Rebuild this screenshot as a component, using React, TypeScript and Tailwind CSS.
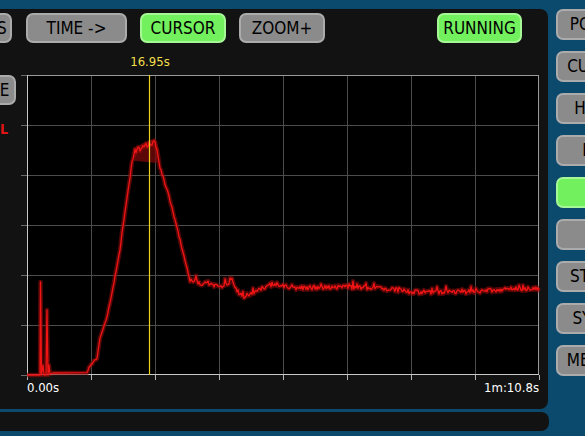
import React from 'react';
import clsx from 'clsx';

const FONT = "font-['DejaVu_Sans_Condensed','DejaVu_Sans',sans-serif]";

const PLOT_W = 512;
const PLOT_H = 300;
const CURSOR_X = 122;

// trace shape, in screen coords of the original capture (offset 27,75)
const KEY: [number, number][] = [
    [87, 373], [89, 367], [97, 358], [100, 338], [107, 317], [112, 293], [115, 277], [120, 250],
    [122, 233], [130, 177], [133, 157], [135, 150], [145, 147], [150, 144], [155, 141], [157, 150],
    [160, 167], [170, 200], [180, 240], [188, 273], [190, 280], [200, 283], [220, 287], [233, 283],
    [238, 292], [242, 298], [253, 292], [273, 284], [297, 288], [340, 287], [380, 288], [413, 292],
    [463, 292], [513, 289], [539, 289],
];

const START: [number, number][] = [
    [27, 375], [40, 375], [40.5, 282], [41.5, 375], [43, 365], [44, 375], [46, 375], [47, 310],
    [48, 375], [49, 365], [50, 374], [53, 373],
];

function rng(seed: number) {
    let s = seed;
    return () => {
        s = (s * 1664525 + 1013904223) % 4294967296;
        return s / 4294967296;
    };
}

function interp(x: number) {
    for (let i = 0; i < KEY.length - 1; i++) {
        const [x0, y0] = KEY[i];
        const [x1, y1] = KEY[i + 1];
        if (x >= x0 && x <= x1) return y0 + ((y1 - y0) * (x - x0)) / (x1 - x0);
    }
    return KEY[KEY.length - 1][1];
}

function buildTrace() {
    const r = rng(7);
    const pts: [number, number][] = [...START];
    for (let x = 87; x <= 539; x += 1) {
        let amp = 0.6;
        if (x >= 130 && x < 158) amp = 3;
        else if (x >= 158 && x < 188) amp = 1.4;
        else if (x >= 188) amp = 2.2;
        let y = interp(x) + (r() - 0.5) * amp * 2;
        if (x > 188 && r() > 0.93) y -= 3 + r() * 3;
        pts.push([x, y]);
    }
    return pts.map(([x, y]) => `${(x - 27).toFixed(1)},${(y - 75).toFixed(1)}`).join(' ');
}

const TRACE = buildTrace();

function Btn({ label, on, className }: { label: string; on?: boolean; className?: string }) {
    return (
        <div
            className={clsx(
                'flex shrink-0 items-center justify-center whitespace-nowrap rounded-[7px] border-2 text-[17px] leading-none text-black',
                on ? 'border-[#a6f796] bg-[#72f05e]' : 'border-[#ababab] bg-[#8b8b8b]',
                className
            )}
        >
            {label}
        </div>
    );
}

function Plot() {
    const hs = [0, 50, 100, 150, 200, 250, 300];
    const vs = [0, 64, 128, 192, 256, 320, 384, 448, 512];
    return (
        <div className="h-[300px] w-[512px] bg-black">
            <svg width={PLOT_W} height={PLOT_H} overflow="visible" className="overflow-visible">
                {hs.slice(1, -1).map((y) => (
                    <line key={'h' + y} x1={0} x2={PLOT_W} y1={y + 0.5} y2={y + 0.5} stroke="#4c4c4c" />
                ))}
                {vs.slice(1, -1).map((x) => (
                    <line key={'v' + x} x1={x + 0.5} x2={x + 0.5} y1={0} y2={PLOT_H} stroke="#4c4c4c" />
                ))}
                {hs.map((y) => (
                    <line key={'lt' + y} x1={-6} x2={0} y1={y + 0.5} y2={y + 0.5} stroke="#6a6a6a" />
                ))}
                {vs.map((x) => (
                    <line key={'bt' + x} x1={x + 0.5} x2={x + 0.5} y1={PLOT_H} y2={PLOT_H + 5} stroke="#b5b5b5" />
                ))}
                <line x1={0} x2={PLOT_W} y1={0.5} y2={0.5} stroke="#9a9a9a" />
                <line x1={PLOT_W - 0.5} x2={PLOT_W - 0.5} y1={0} y2={PLOT_H} stroke="#9a9a9a" />
                <line x1={0.5} x2={0.5} y1={0} y2={PLOT_H} stroke="#c8c8c8" />
                <line x1={0} x2={PLOT_W} y1={PLOT_H - 0.5} y2={PLOT_H - 0.5} stroke="#c8c8c8" />

                <polygon points="106,73 128,63 132,74 130,88 108,86" fill="#7a0a0a" opacity={0.75} />
                <polyline points={TRACE} fill="none" stroke="#8e0b0b" strokeWidth={4.5} opacity={0.6} strokeLinejoin="round" />
                <polyline points={TRACE} fill="none" stroke="#f01414" strokeWidth={1.3} strokeLinejoin="round" />

                <line x1={CURSOR_X + 0.5} x2={CURSOR_X + 0.5} y1={0} y2={PLOT_H} stroke="#ecd21e" strokeWidth={1.2} />
            </svg>
        </div>
    );
}

export default function App() {
    return (
        <div className={clsx('flex h-[436px] w-[585px] flex-col overflow-hidden bg-[#0b4a6d] pt-[9px]', FONT)}>
            <div className="flex h-[400px] shrink-0">
                <div className="flex h-[400px] w-[548px] shrink-0 flex-col rounded-r-lg bg-[#121212]">
                    <div className="mt-[4px] flex h-[30px] gap-[13px]">
                        <Btn label="SETTINGS" className="-ml-[74px] w-[86px]" />
                        <Btn label="TIME ->" className="ml-px w-[101px]" />
                        <Btn on label="CURSOR" className="w-[86px]" />
                        <Btn label="ZOOM+" className="w-[86px]" />
                        <div className="flex-1" />
                        <Btn on label="RUNNING" className="mr-[26px] w-[85px]" />
                    </div>

                    <div className="flex">
                        <div className="flex w-[27px] shrink-0 flex-col pt-[32px]">
                            <div className="flex w-[16px] justify-end">
                                <Btn label="SCALE" className="h-[30px] w-[62px]" />
                            </div>
                            <div className="mt-[16px] flex w-[8px] justify-end">
                                <span className="whitespace-nowrap text-[14px] font-bold leading-[16px] text-[#e01414]">LEVEL</span>
                            </div>
                        </div>

                        <div className="flex w-[512px] flex-col">
                            <div className="relative h-[32px]">
                                <span
                                    className="absolute top-[11px] -translate-x-1/2 text-[13px] leading-[15px] text-[#f2df4a]"
                                    style={{ left: CURSOR_X + 1 }}
                                >
                                    16.95s
                                </span>
                            </div>
                            <Plot />
                            <div className="mt-[5px] flex justify-between text-[13px] leading-[15px] text-white">
                                <span>0.00s</span>
                                <span>1m:10.8s</span>
                            </div>
                        </div>
                    </div>
                </div>

                <div className="ml-[8px] flex flex-col gap-[11px]">
                    {[
                        ['POINT', false],
                        ['CURVE', false],
                        ['HIDE', false],
                        ['I/O', false],
                        ['A', true],
                        ['B', false],
                        ['STATS', false],
                        ['SYNC', false],
                        ['METER', false],
                    ].map(([l, on]) => (
                        <Btn key={l as string} label={l as string} on={on as boolean} className="h-[31px] w-[74px]" />
                    ))}
                </div>
            </div>

            <div className="mt-[3px] h-[19px] w-[549px] shrink-0 rounded-r-lg bg-[#121212]" />
        </div>
    );
}
